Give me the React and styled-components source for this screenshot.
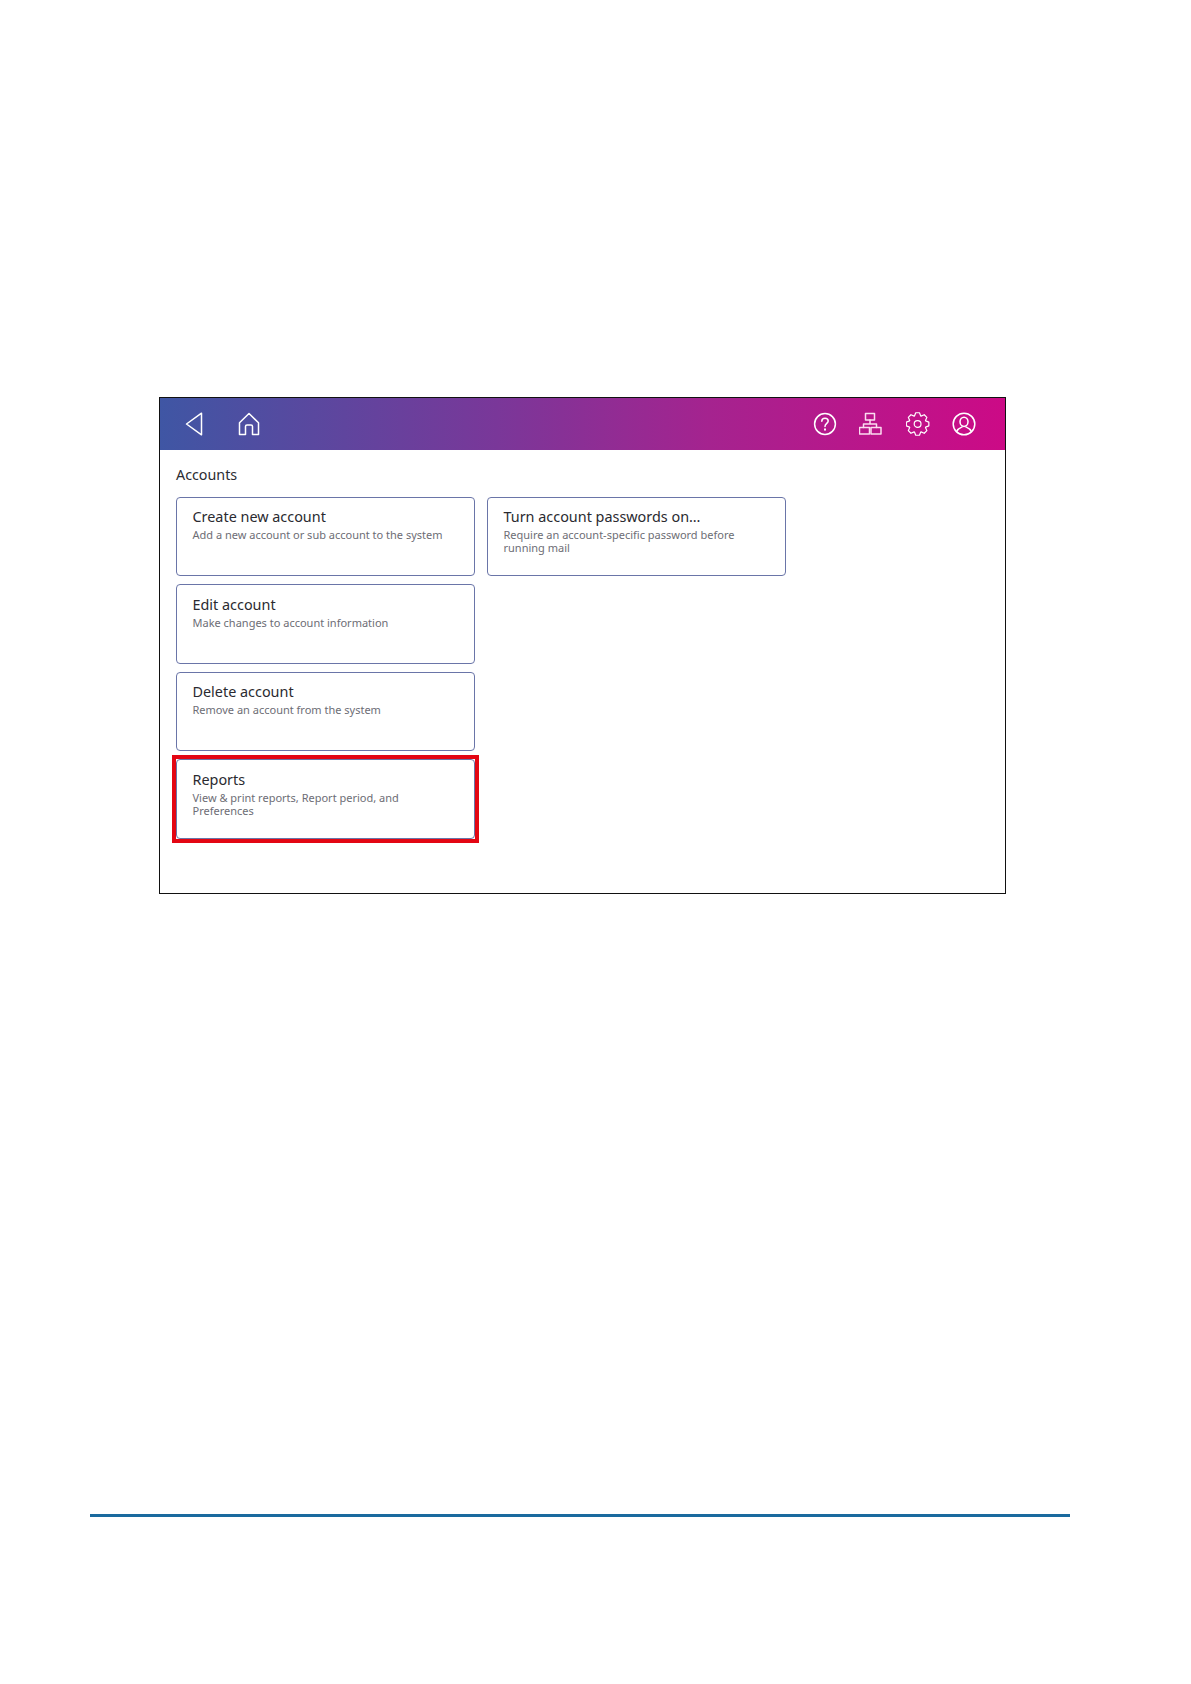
import React from "react";
import styled, { createGlobalStyle } from "styled-components";

const Global = createGlobalStyle`
  html, body { margin: 0; padding: 0; background: #fff; }
  body { font-family: "Noto Sans", "Open Sans", Arial, sans-serif; }
`;

const Page = styled.div`
  width: 1191px;
  height: 1684px;
  padding-top: 397px;
  box-sizing: border-box;
  display: flex;
  flex-direction: column;
`;

const Screen = styled.section`
  width: 847px;
  height: 497px;
  margin-left: 159px;
  box-sizing: border-box;
  border: 1px solid #111;
  display: flex;
  flex-direction: column;
`;

const TopBar = styled.header`
  height: 52px;
  flex: none;
  display: flex;
  align-items: center;
  justify-content: space-between;
  padding: 0 29px 0 25px;
  background: linear-gradient(90deg, #3f56a4 0%, #7a3799 40%, #a5238f 65%, #cc0a86 100%);
`;

const IconGroup = styled.div`
  display: flex;
  align-items: center;
  gap: ${(p) => p.$gap}px;
`;

const Icon = styled.svg`
  display: block;
  fill: none;
  stroke: ${(p) => p.$stroke || "#fff"};
  stroke-width: ${(p) => p.$weight || 1.5};
  stroke-linecap: round;
  stroke-linejoin: round;
`;

const Body = styled.main`
  flex: 1;
  padding: 15px 16px 0;
`;

const Title = styled.h1`
  margin: 0 0 12px;
  font-size: 14.3px;
  line-height: 20px;
  font-weight: 400;
  color: #2c2c32;
`;

const Grid = styled.div`
  display: grid;
  grid-template-columns: 299px 299px;
  grid-auto-rows: 79.4px;
  column-gap: 12px;
  row-gap: 8px;
`;

const Card = styled.div`
  position: relative;
  box-sizing: border-box;
  border: 1px solid #6a75a8;
  border-radius: 4px;
  padding: 9.4px 15px 0 15.5px;
  grid-column: ${(p) => p.$col};
  grid-row: ${(p) => p.$row};
  background: #fff;
`;

const Marker = styled.span`
  position: absolute;
  inset: -5px -5px -5.5px;
  border: 4px solid #e30613;
  pointer-events: none;
`;

const CardTitle = styled.div`
  font-size: 14.4px;
  line-height: 19px;
  color: #2a2a30;
`;

const CardText = styled.div`
  font-size: 11px;
  line-height: 13px;
  margin-top: 2px;
  color: #6d6d75;
  max-width: 262px;
`;

const Rule = styled.div`
  width: 980px;
  height: 3px;
  margin: 620px 0 0 90px;
  background: #1a6a9e;
`;

const Back = () => (
  <Icon width="18" height="24" viewBox="0 0 18 24">
    <path d="M16.5 1.2 L1.5 12 L16.5 22.8 Z" />
  </Icon>
);
const Home = () => (
  <Icon width="24" height="24" viewBox="0 0 24 24">
    <path d="M2.5 22.5 V10.8 L12 1.5 L21.5 10.8 V22.5 H15.5 V14.5 Q15.5 13 14 13 H10 Q8.5 13 8.5 14.5 V22.5 Z" />
  </Icon>
);
const Help = () => (
  <Icon width="24" height="24" viewBox="0 0 24 24">
    <circle cx="12" cy="12" r="10.4" />
    <path d="M8.8 9.2 C8.8 7.2 10.3 6.2 12 6.2 C13.9 6.2 15.2 7.4 15.2 9 C15.2 11.2 12 11.6 12 14.4" />
    <path d="M12 17.3 V17.7" strokeWidth="2" />
  </Icon>
);
const Network = () => (
  <Icon width="24" height="24" viewBox="0 0 24 24" $stroke="#fbdcf0">
    <rect x="6.5" y="1.5" width="9" height="6.5" />
    <path d="M11 8 V12 M4.5 15.5 V12 H17.5 V15.5" />
    <rect x="0.5" y="15.5" width="10" height="6.5" />
    <rect x="12" y="15.5" width="10" height="6.5" />
  </Icon>
);

const gearPath = () => {
  const teeth = 8;
  const pts = [];
  for (let i = 0; i < teeth; i++) {
    const a = (i / teeth) * Math.PI * 2 - Math.PI / 2;
    const w = Math.PI / teeth;
    [
      [8.6, -w * 0.95],
      [11.4, -w * 0.42],
      [11.4, w * 0.42],
      [8.6, w * 0.95],
    ].forEach(([r, d]) => {
      pts.push(`${(11.6 + r * Math.cos(a + d)).toFixed(2)} ${(12 + r * Math.sin(a + d)).toFixed(2)}`);
    });
  }
  return `M${pts.join(" L")} Z`;
};

const Gear = () => (
  <Icon width="24" height="24" viewBox="0 0 24 24" $weight={1.2}>
    <circle cx="11.6" cy="12" r="3.4" />
    <path d={gearPath()} />
  </Icon>
);
const User = () => (
  <Icon width="24" height="24" viewBox="0 0 24 24">
    <circle cx="12" cy="12" r="10.8" />
    <ellipse cx="12" cy="9.8" rx="4" ry="4.6" />
    <path d="M4.6 19.6 C6 16.4 8.5 15.6 10 15 M19.4 19.6 C18 16.4 15.5 15.6 14 15" />
  </Icon>
);

const cards = [
  { col: 1, row: 1, title: "Create new account", text: "Add a new account or sub account to the system" },
  { col: 1, row: 2, title: "Edit account", text: "Make changes to account information" },
  { col: 1, row: 3, title: "Delete account", text: "Remove an account from the system" },
  { col: 1, row: 4, title: "Reports", text: "View & print reports, Report period, and Preferences", marked: true },
  { col: 2, row: 1, title: "Turn account passwords on…", text: "Require an account-specific password before running mail" },
];

export default function App() {
  return (
    <Page>
      <Global />
      <Screen>
        <TopBar>
          <IconGroup $gap={34}>
            <Back />
            <Home />
          </IconGroup>
          <IconGroup $gap={22.3}>
            <Help />
            <Network />
            <Gear />
            <User />
          </IconGroup>
        </TopBar>
        <Body>
          <Title>Accounts</Title>
          <Grid>
            {cards.map((c) => (
              <Card key={c.title} $col={c.col} $row={c.row}>
                <CardTitle>{c.title}</CardTitle>
                <CardText>{c.text}</CardText>
                {c.marked && <Marker />}
              </Card>
            ))}
          </Grid>
        </Body>
      </Screen>
      <Rule />
    </Page>
  );
}
